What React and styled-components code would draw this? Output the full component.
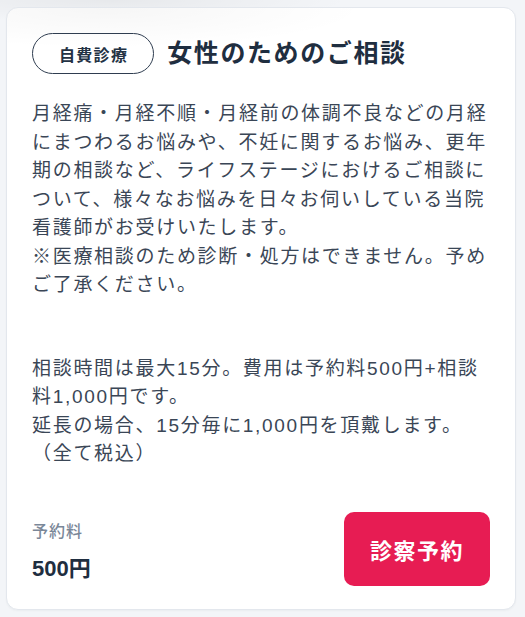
import React from "react"
import styled, { createGlobalStyle } from "styled-components"

const GlobalStyle = createGlobalStyle`
  html, body {
    margin: 0;
    padding: 0;
    background: #f3f5f8;
  }
  body {
    font-family: "Liberation Sans", "Noto Sans CJK JP", sans-serif;
    -webkit-font-smoothing: antialiased;
  }
`

const Page = styled.div`
  width: 525px;
  height: 617px;
  box-sizing: border-box;
  padding: 7px 9px 7px 6px;
  background:
    radial-gradient(ellipse 240px 22px at 110px 0, rgba(0, 0, 0, 0.05), transparent),
    #f3f5f8;
`

const Card = styled.section`
  box-sizing: border-box;
  height: 603px;
  display: flex;
  flex-direction: column;
  padding: 25px 25px 23px 25px;
  border: 1px solid #e3e7ed;
  border-radius: 12px;
  background:
    radial-gradient(ellipse 260px 40px at 100px 0, rgba(0, 0, 0, 0.035), transparent),
    #ffffff;
  box-shadow: 0 1px 2px rgba(30, 45, 61, 0.04);
`

const Header = styled.header`
  display: flex;
  align-items: center;
  gap: 13px;
`

const Badge = styled.span`
  box-sizing: border-box;
  height: 41px;
  display: inline-flex;
  align-items: center;
  padding: 0 25px 0 26px;
  border: 1.5px solid #2f3d50;
  border-radius: 999px;
  color: #243244;
  font-size: 16px;
  font-weight: 700;
  letter-spacing: 1.3px;
`

const Title = styled.h2`
  margin: 0;
  color: #1f2e40;
  font-size: 25px;
  font-weight: 700;
  letter-spacing: 1.6px;
  line-height: 1.3;
`

const Body = styled.div`
  margin-top: 26px;
  color: #3a4656;
  font-size: 19px;
  letter-spacing: 1.7px;
  line-height: 28.5px;
`

const Paragraph = styled.p`
  margin: 0;
  & + & {
    margin-top: 55px;
  }
`

const Footer = styled.footer`
  margin-top: auto;
  display: flex;
  align-items: center;
  justify-content: space-between;
`

const Price = styled.div`
  display: flex;
  flex-direction: column;
  gap: 8px;
  padding-top: 2px;
`

const PriceLabel = styled.span`
  color: #7a8798;
  font-size: 16px;
  font-weight: 500;
  letter-spacing: 1px;
`

const PriceValue = styled.strong`
  color: #1f2e40;
  font-size: 22px;
  font-weight: 700;
`

const ReserveButton = styled.button`
  width: 146px;
  height: 74px;
  border: none;
  border-radius: 10px;
  background: #e71c53;
  color: #ffffff;
  font-family: inherit;
  font-size: 22px;
  font-weight: 700;
  letter-spacing: 1.5px;
  cursor: pointer;
`

export default function App() {
  return (
    <>
      <GlobalStyle />
      <Page>
        <Card>
          <Header>
            <Badge>自費診療</Badge>
            <Title>女性のためのご相談</Title>
          </Header>
          <Body>
            <Paragraph>
              月経痛・月経不順・月経前の体調不良などの月経にまつわるお悩みや、不妊に関するお悩み、更年期の相談など、ライフステージにおけるご相談について、様々なお悩みを日々お伺いしている当院看護師がお受けいたします。
              <br />
              ※医療相談のため診断・処方はできません。予めご了承ください。
            </Paragraph>
            <Paragraph>
              相談時間は最大15分。費用は予約料500円+相談料1,000円です。
              <br />
              延長の場合、15分毎に1,000円を頂戴します。
              <br />
              （全て税込）
            </Paragraph>
          </Body>
          <Footer>
            <Price>
              <PriceLabel>予約料</PriceLabel>
              <PriceValue>500円</PriceValue>
            </Price>
            <ReserveButton type="button">診察予約</ReserveButton>
          </Footer>
        </Card>
      </Page>
    </>
  )
}
